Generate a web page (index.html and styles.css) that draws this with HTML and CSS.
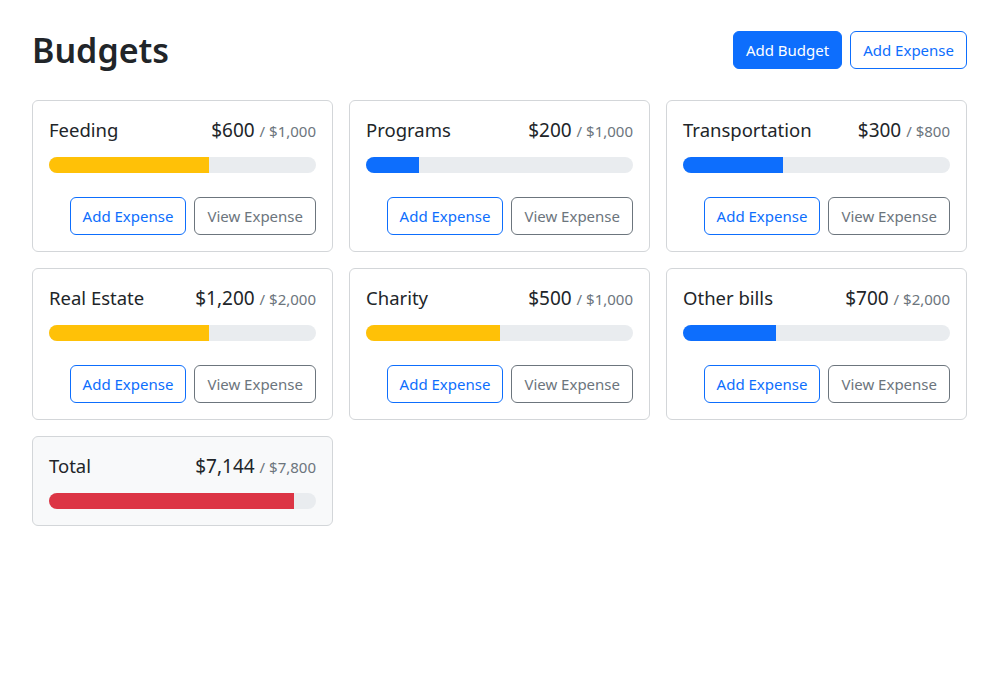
FILE: index.html
```html
<!DOCTYPE html>
<html lang="en">
<head>
<meta charset="utf-8">
<title>Budgets</title>
<link rel="stylesheet" href="styles.css">
</head>
<body>
<div class="container">
  <header class="header">
    <h1 class="title">Budgets</h1>
    <div class="actions">
      <button class="btn btn-primary">Add Budget</button>
      <button class="btn btn-outline-primary">Add Expense</button>
    </div>
  </header>
  <div class="grid">
    <div class="card">
      <div class="card-head"><span class="name">Feeding</span><span class="amount">$600 <span class="max">/ $1,000</span></span></div>
      <div class="progress"><div class="bar warning" style="width:60%"></div></div>
      <div class="card-actions"><button class="btn btn-outline-primary">Add Expense</button><button class="btn btn-outline-secondary">View Expense</button></div>
    </div>
    <div class="card">
      <div class="card-head"><span class="name">Programs</span><span class="amount">$200 <span class="max">/ $1,000</span></span></div>
      <div class="progress"><div class="bar primary" style="width:20%"></div></div>
      <div class="card-actions"><button class="btn btn-outline-primary">Add Expense</button><button class="btn btn-outline-secondary">View Expense</button></div>
    </div>
    <div class="card">
      <div class="card-head"><span class="name">Transportation</span><span class="amount">$300 <span class="max">/ $800</span></span></div>
      <div class="progress"><div class="bar primary" style="width:37.5%"></div></div>
      <div class="card-actions"><button class="btn btn-outline-primary">Add Expense</button><button class="btn btn-outline-secondary">View Expense</button></div>
    </div>
    <div class="card">
      <div class="card-head"><span class="name">Real Estate</span><span class="amount">$1,200 <span class="max">/ $2,000</span></span></div>
      <div class="progress"><div class="bar warning" style="width:60%"></div></div>
      <div class="card-actions"><button class="btn btn-outline-primary">Add Expense</button><button class="btn btn-outline-secondary">View Expense</button></div>
    </div>
    <div class="card">
      <div class="card-head"><span class="name">Charity</span><span class="amount">$500 <span class="max">/ $1,000</span></span></div>
      <div class="progress"><div class="bar warning" style="width:50%"></div></div>
      <div class="card-actions"><button class="btn btn-outline-primary">Add Expense</button><button class="btn btn-outline-secondary">View Expense</button></div>
    </div>
    <div class="card">
      <div class="card-head"><span class="name">Other bills</span><span class="amount">$700 <span class="max">/ $2,000</span></span></div>
      <div class="progress"><div class="bar primary" style="width:35%"></div></div>
      <div class="card-actions"><button class="btn btn-outline-primary">Add Expense</button><button class="btn btn-outline-secondary">View Expense</button></div>
    </div>
    <div class="card card-light">
      <div class="card-head"><span class="name">Total</span><span class="amount">$7,144 <span class="max">/ $7,800</span></span></div>
      <div class="progress"><div class="bar danger" style="width:91.6%"></div></div>
    </div>
  </div>
</div>
</body>
</html>
```

FILE: styles.css
```css
* { box-sizing: border-box; }
html, body { margin: 0; padding: 0; background: #fff; }
body {
  font-family: "Noto Sans", "Open Sans", sans-serif;
  color: #212529;
  font-size: 16px;
  line-height: 1.5;
}
.container { padding: 30px 32px 32px; }
.header {
  display: flex;
  align-items: center;
  justify-content: space-between;
  margin-bottom: 29px;
}
.title {
  margin: 0;
  font-size: 34px;
  font-weight: 600;
  line-height: 1.2;
}
.actions { display: flex; gap: 8px; }
.btn {
  font-family: inherit;
  font-size: 15px;
  line-height: 24px;
  padding: 6px 12px;
  border-radius: 6px;
  border: 1px solid transparent;
  background: transparent;
  cursor: pointer;
}
.btn-primary { background: #0d6efd; border-color: #0d6efd; color: #fff; }
.btn-outline-primary { border-color: #0d6efd; color: #0d6efd; }
.btn-outline-secondary { border-color: #6c757d; color: #6c757d; }
.grid {
  display: grid;
  grid-template-columns: repeat(3, 1fr);
  gap: 16px;
  align-items: start;
}
.card {
  border: 1px solid #d3d6d9;
  border-radius: 6px;
  padding: 16px;
  background: #fff;
}
.card-light { background: #f8f9fa; }
.card-head {
  display: flex;
  justify-content: space-between;
  align-items: baseline;
  height: 24px;
  margin-bottom: 16px;
  line-height: 24px;
  padding-top: 1px;
}
.name { font-size: 18.5px; }
.amount { font-size: 19px; }
.max { font-size: 15px; color: #6c757d; }
.progress {
  height: 16px;
  background: #e9ecef;
  border-radius: 8px;
  overflow: hidden;
  display: flex;
}
.bar { height: 100%; }
.bar.warning { background: #ffc107; }
.bar.primary { background: #0d6efd; }
.bar.danger { background: #dc3545; }
.card-actions {
  display: flex;
  justify-content: flex-end;
  gap: 8px;
  margin-top: 24px;
}
```
